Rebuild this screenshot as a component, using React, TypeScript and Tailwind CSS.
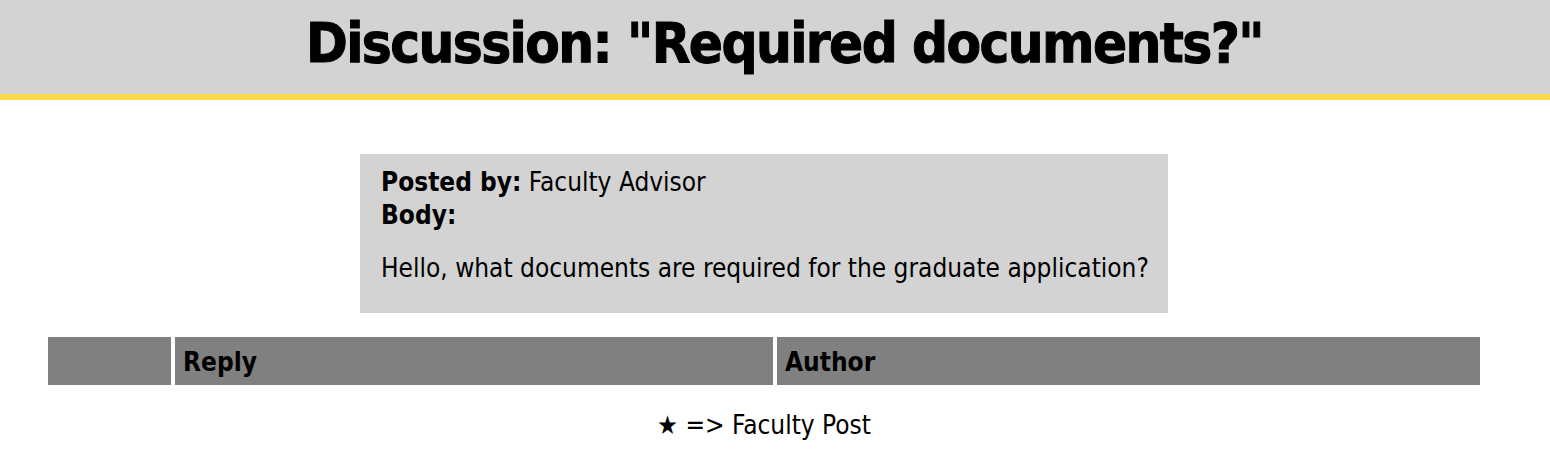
export default function App() {
  return (
    <div className="min-h-screen bg-white text-black" style={{ fontFamily: '"DejaVu Sans Condensed", "DejaVu Sans", sans-serif' }}>
      {/* Page header */}
      <header className="h-[100px] bg-[#d3d3d3] border-b-[6px] border-[#f9d94a] flex items-center justify-center pl-[19px]">
        <h1 className="text-[56px] font-bold leading-none pb-[8px] tracking-[-1.6px] [-webkit-text-stroke:1px_black]">
          Discussion: "Required documents?"
        </h1>
      </header>

      <main className="w-[1528px] px-[48px]">
        {/* Original post */}
        <div className="flex justify-center pt-[54px]">
          <div className="w-[808px] h-[159px] bg-[#d3d3d3] pl-[21px] pr-[10px] pt-[12px] text-[26px] leading-[33px]">
            <div>
              <span className="font-bold">Posted by:</span> Faculty Advisor
            </div>
            <div className="font-bold">Body:</div>
            <p className="mt-[20px] whitespace-nowrap">Hello, what documents are required for the graduate application?</p>
          </div>
        </div>

        {/* Replies table */}
        <div className="flex gap-[4px] h-[48px] mt-[24px] text-[26px] font-bold">
          <div className="w-[123px] bg-[#808080]" />
          <div className="w-[598px] bg-[#808080] flex items-center px-[8px] pt-[2px]">Reply</div>
          <div className="flex-1 bg-[#808080] flex items-center px-[8px] pt-[2px]">Author</div>
        </div>

        <p className="text-center text-[26px] mt-[21px]">★ =&gt; Faculty Post</p>
      </main>
    </div>
  );
}
